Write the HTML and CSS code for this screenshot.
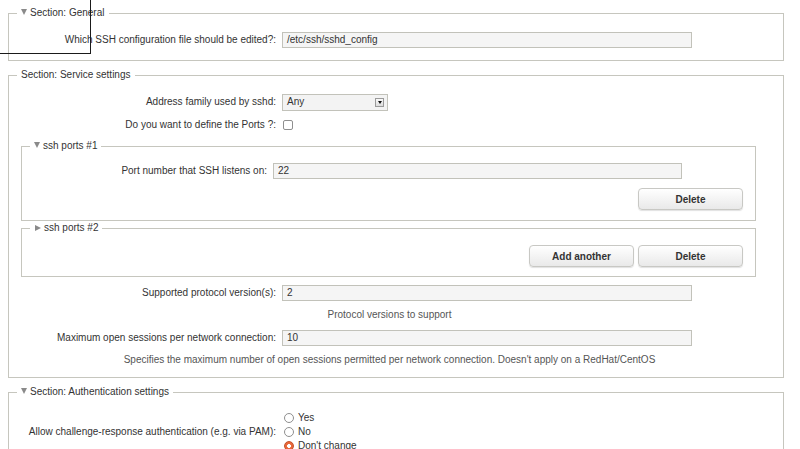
FILE: index.html
```html
<!DOCTYPE html>
<html>

<head>
  <title>SSH Server</title>
  <meta charset="UTF-8">
  <link rel="stylesheet" href="styles.css">
</head>

<body>
  <div class="focus-box"></div>

  <fieldset class="section">
    <legend><span class="tri down"></span>Section: General</legend>
    <div class="row first">
      <label class="lbl">Which SSH configuration file should be edited?:</label>
      <div class="field"><span class="input">/etc/ssh/sshd_config</span></div>
    </div>
  </fieldset>

  <fieldset class="section">
    <legend>Section: Service settings</legend>
    <div class="row first">
      <label class="lbl">Address family used by sshd:</label>
      <div class="field">
        <span class="select">Any<span class="arrow"></span></span>
      </div>
    </div>
    <div class="row check-row">
      <label class="lbl">Do you want to define the Ports ?:</label>
      <div class="field"><span class="checkbox"></span></div>
    </div>

    <fieldset class="sub">
      <legend><span class="tri down"></span>ssh ports #1</legend>
      <div class="row first">
        <label class="lbl">Port number that SSH listens on:</label>
        <div class="field"><span class="input">22</span></div>
      </div>
      <div class="buttons">
        <button class="button">Delete</button>
      </div>
    </fieldset>

    <fieldset class="sub">
      <legend><span class="tri right"></span>ssh ports #2</legend>
      <div class="buttons">
        <button class="button">Add another</button>
        <button class="button">Delete</button>
      </div>
    </fieldset>

    <div class="row proto">
      <label class="lbl">Supported protocol version(s):</label>
      <div class="field"><span class="input">2</span></div>
    </div>
    <div class="help">Protocol versions to support</div>
    <div class="row sessions">
      <label class="lbl">Maximum open sessions per network connection:</label>
      <div class="field"><span class="input">10</span></div>
    </div>
    <div class="help">Specifies the maximum number of open sessions permitted per network connection. Doesn't apply on a RedHat/CentOS</div>
  </fieldset>

  <fieldset class="section last">
    <legend><span class="tri down"></span>Section: Authentication settings</legend>
    <div class="row first radio-row">
      <label class="lbl">Allow challenge-response authentication (e.g. via PAM):</label>
      <div class="field radios">
        <div class="opt"><span class="radio"></span>Yes</div>
        <div class="opt"><span class="radio"></span>No</div>
        <div class="opt"><span class="radio on"></span>Don't change</div>
      </div>
    </div>
  </fieldset>
</body>

</html>
```

FILE: styles.css
```css
body {
  margin: 0;
  padding: 7px 0 0 8px;
  font-family: "Liberation Sans", Arial, sans-serif;
  font-size: 10px;
  line-height: 12px;
  color: #333;
  background: #fff;
  overflow: hidden;
}

.focus-box {
  position: absolute;
  left: -1px;
  top: -1px;
  width: 90px;
  height: 53px;
  border: 1px solid #1a1a1a;
}

fieldset {
  margin: 0;
  padding: 0 8px;
  border: 1px solid #c6c6be;
  box-sizing: border-box;
  min-width: 0;
}

legend {
  padding: 0 4px;
  line-height: 12px;
  color: #333;
}

.section {
  width: 776px;
  margin-bottom: 8px;
  padding-bottom: 12px;
}

.section:nth-of-type(2) {
  padding-bottom: 11px;
}

.section.last {
  padding-bottom: 40px;
}

.sub {
  width: 735px;
  margin-left: 4px;
  padding-bottom: 10px;
}

.sub + .sub {
  margin-top: 1px;
  padding-bottom: 9px;
}

.tri {
  display: inline-block;
  width: 0;
  height: 0;
  margin-right: 3px;
  vertical-align: 1px;
}

.tri.down {
  border-left: 3.5px solid transparent;
  border-right: 3.5px solid transparent;
  border-top: 6px solid #8a8a8a;
}

.tri.right {
  border-top: 3.5px solid transparent;
  border-bottom: 3.5px solid transparent;
  border-left: 6px solid #8a8a8a;
  margin-left: 1px;
  vertical-align: 0;
}

.row {
  display: flex;
  align-items: center;
  height: 16px;
}

.row.first {
  margin-top: 13px;
}

.sub .row.first {
  margin-top: 11px;
}

.lbl {
  width: 265px;
  flex: none;
  box-sizing: border-box;
  padding-right: 6px;
  text-align: right;
  white-space: nowrap;
}

.sub .lbl {
  width: 243px;
}

.input {
  display: block;
  width: 410px;
  height: 16px;
  box-sizing: border-box;
  border: 1px solid #c2c2ba;
  background: #f5f5f5;
  padding: 0 4px;
  line-height: 14px;
  color: #333;
}

.sub .input {
  width: 409px;
}

.select {
  display: flex;
  align-items: center;
  justify-content: space-between;
  width: 106px;
  height: 17px;
  box-sizing: border-box;
  border: 1px solid #c2c2ba;
  background: #f3f3f3;
  padding: 0 2px 0 4px;
}

.select .arrow {
  position: relative;
  width: 9px;
  height: 9px;
  box-sizing: border-box;
  border: 1px solid #9a9a9a;
  background: linear-gradient(#fafafa, #dcdcdc);
  margin-right: 1px;
}

.select .arrow::after {
  content: "";
  position: absolute;
  left: 1.5px;
  top: 2.5px;
  border-left: 2px solid transparent;
  border-right: 2px solid transparent;
  border-top: 3px solid #111;
}

.check-row {
  margin-top: 7px;
}

.checkbox {
  display: block;
  width: 10px;
  height: 10px;
  box-sizing: border-box;
  border: 1px solid #8f8f8f;
  border-radius: 2px;
  background: #fff;
  margin-left: 1px;
}

.check-row + .sub {
  margin-top: 7px;
}

.buttons {
  display: flex;
  justify-content: flex-end;
  gap: 4px;
  padding-right: 4px;
  margin-top: 9px;
}

.sub legend + .buttons {
  margin-top: 11px;
}

.button {
  width: 105px;
  height: 22px;
  border: 1px solid #c8c8c4;
  border-radius: 4px;
  background: linear-gradient(#ffffff, #e9e9e9);
  box-shadow: 0 1px 1px rgba(0, 0, 0, .12);
  font-family: "Liberation Sans", Arial, sans-serif;
  font-size: 10px;
  font-weight: bold;
  color: #333;
  padding: 0;
}

.proto {
  margin-top: 8px;
}

.help {
  margin-top: 8px;
  padding-right: 13px;
  text-align: center;
  color: #555;
  white-space: nowrap;
}

.sessions {
  margin-top: 9px;
}

.sessions + .help {
  margin-top: 8px;
}

.radio-row {
  height: 42px;
}

.radios {
  display: flex;
  flex-direction: column;
}

.opt {
  display: flex;
  align-items: center;
  height: 14px;
}

.radio {
  display: block;
  width: 10px;
  height: 10px;
  box-sizing: border-box;
  border: 1px solid #8f8f8f;
  border-radius: 50%;
  background: #fff;
  margin: 0 4px 0 2px;
}

.radio.on {
  border-color: #c4522a;
  background: radial-gradient(circle, #fff 0 1.6px, #e8683a 2.2px);
}
```
